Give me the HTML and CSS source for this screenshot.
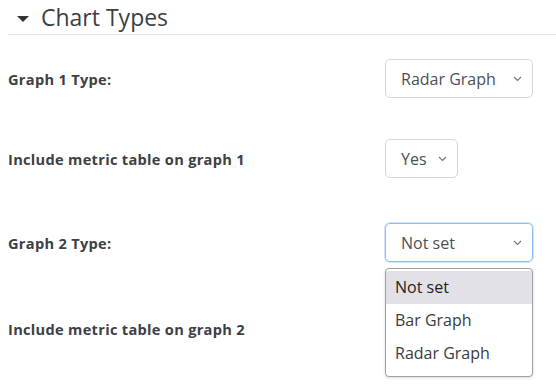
FILE: index.html
```html
<!DOCTYPE html>
<html lang="en">
<head>
<meta charset="UTF-8">
<meta name="viewport" content="width=device-width, initial-scale=1.0">
<title>Chart Types</title>
<link rel="stylesheet" href="styles.css">
</head>
<body>

<div class="section">
    <h3 class="section-head">
        <svg class="caret" width="12" height="6" viewBox="0 0 12 6"><path d="M0 0h12L6 6z" fill="#333"/></svg>
        Chart Types
    </h3>

    <div class="row r1">
        <label>Graph 1 Type:</label>
        <div class="select wide">
            <span>Radar Graph</span>
            <svg class="chev" width="9" height="6" viewBox="0 0 9 6"><path d="M1 1l3.5 3.5L8 1" fill="none" stroke="#777" stroke-width="1.2"/></svg>
        </div>
    </div>

    <div class="row r2">
        <label>Include metric table on graph 1</label>
        <div class="select narrow">
            <span>Yes</span>
            <svg class="chev" width="9" height="6" viewBox="0 0 9 6"><path d="M1 1l3.5 3.5L8 1" fill="none" stroke="#777" stroke-width="1.2"/></svg>
        </div>
    </div>

    <div class="row r3">
        <label>Graph 2 Type:</label>
        <div class="select wide focus">
            <span>Not set</span>
            <svg class="chev" width="9" height="6" viewBox="0 0 9 6"><path d="M1 1l3.5 3.5L8 1" fill="none" stroke="#777" stroke-width="1.2"/></svg>
            <ul class="dropdown">
                <li class="active">Not set</li>
                <li>Bar Graph</li>
                <li>Radar Graph</li>
            </ul>
        </div>
    </div>

    <div class="row r4">
        <label>Include metric table on graph 2</label>
    </div>
</div>

</body>
</html>
```

FILE: styles.css
```css
*{
    box-sizing:border-box;
}

html,body{
    height:100%;
}

body{
    margin:0;
    padding-left:8px;
    font-family:"Open Sans","Noto Sans",sans-serif;
    background:#fff;
    color:#373a3c;
}

.section-head{
    margin:0;
    height:35px;
    display:flex;
    align-items:center;
    gap:12px;
    padding-left:9px;
    font-weight:400;
    font-size:23px;
    color:#3a3f44;
    border-bottom:1px solid #e3e3e3;
}

.caret{
    margin-top:3px;
}

.row{
    display:flex;
    align-items:center;
    height:39px;
}

.r1{ margin-top:24px; }
.r2{ margin-top:41px; }
.r3{ margin-top:45px; }
.r4{ margin-top:45px; height:44px; }

label{
    width:377px;
    font-size:14.6px;
    font-weight:700;
    letter-spacing:0.3px;
    color:#3d4044;
}

.select{
    position:relative;
    height:39px;
    border:1px solid #d3d7db;
    border-radius:5px;
    display:flex;
    align-items:center;
    justify-content:space-between;
    padding:0 10px 0 15px;
    font-size:16px;
    color:#4a5057;
}

.wide{ width:148px; }
.narrow{ width:73px; }

.focus{
    border-color:#8cc0f0;
    box-shadow:0 0 0 1px rgba(120,180,240,.35);
}

.dropdown{
    position:absolute;
    top:44px;
    left:-1px;
    width:148px;
    margin:0;
    padding:2px 0 6px;
    list-style:none;
    background:#fff;
    border:1px solid #a0a0a0;
    border-radius:4px;
    box-shadow:0 1px 3px rgba(0,0,0,.15);
    z-index:2;
}

.dropdown li{
    height:33px;
    line-height:33px;
    padding-left:9px;
    font-size:16px;
    color:#3b3b3b;
}

.dropdown li.active{
    background:#e1e1e7;
    color:#222;
}
```
